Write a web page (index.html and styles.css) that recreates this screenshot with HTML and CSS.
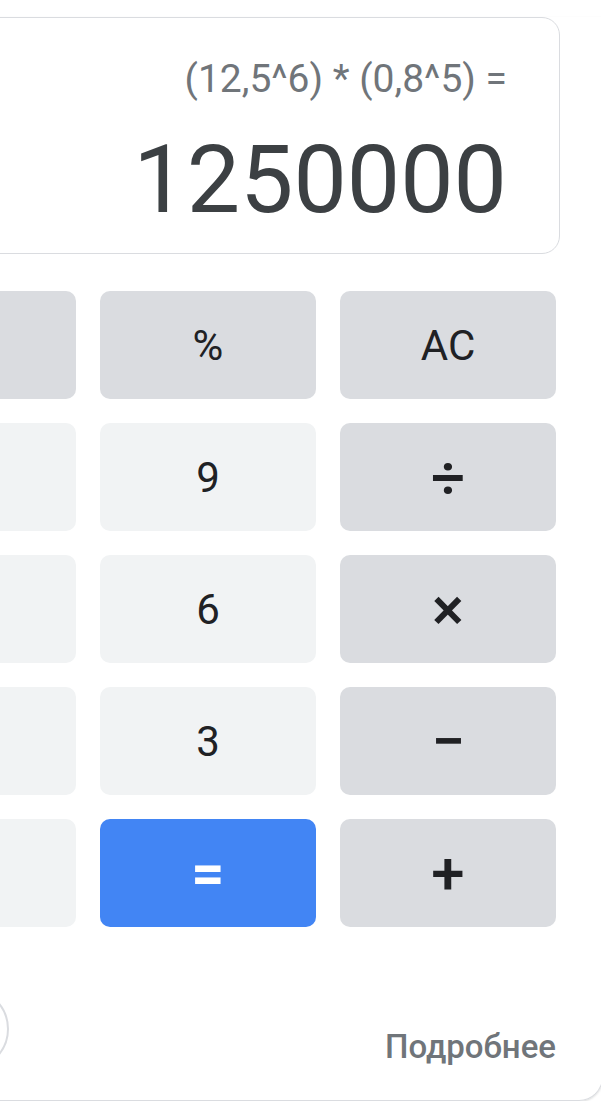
FILE: index.html
```html
<!DOCTYPE html>
<html>
  <head>
    <title>Калькулятор</title>
    <meta name="viewport" content="width=device-width, initial-scale=1.0">
    <link rel="stylesheet" href="styles.css">
  </head>
  <body>
    <div class="card">
      <div class="display">
        <div class="expression">(12,5^6) * (0,8^5) =</div>
        <div class="result">1250000</div>
      </div>

      <div class="keys">
        <button class="key op"></button>
        <button class="key op">%</button>
        <button class="key op">AC</button>

        <button class="key num"></button>
        <button class="key num">9</button>
        <button class="key op sign">÷</button>

        <button class="key num"></button>
        <button class="key num">6</button>
        <button class="key op sign">×</button>

        <button class="key num"></button>
        <button class="key num">3</button>
        <button class="key op sign">−</button>

        <button class="key num"></button>
        <button class="key equals">=</button>
        <button class="key op sign">+</button>
      </div>

      <div class="card-footer">
        <span class="history"></span>
        <a class="more" href="#">Подробнее</a>
      </div>
    </div>
  </body>
</html>
```

FILE: styles.css
```css
/* Calculator card */
html,
body {
  overflow: hidden;
}

body {
  margin: 0;
  background-color: #fff;
  font-family: Roboto, "Liberation Sans", Arial, sans-serif;
}

.card {
  box-sizing: border-box;
  width: 783px;
  margin-left: -180px;
  padding: 0 42px 30px 39px;
  border: 1px solid #dadce0;
  border-top: none;
  border-radius: 0 0 24px 24px;
  box-shadow: 0 1px 2px rgba(60, 64, 67, 0.18);
}

.display {
  margin-top: 17px;
  padding: 38px 52px 20px 20px;
  border: 1px solid #dadce0;
  border-radius: 18px;
  text-align: right;
}

.expression {
  font-size: 39px;
  line-height: 46px;
  color: #70757a;
}

.result {
  margin-top: 25px;
  font-size: 95px;
  line-height: 106px;
  color: #3c4043;
}

.keys {
  display: grid;
  grid-template-columns: repeat(3, 216px);
  grid-auto-rows: 108px;
  gap: 24px;
  margin: 37px 4px 0 0;
}

.key {
  border: none;
  border-radius: 10px;
  padding: 0;
  font-family: inherit;
  font-size: 42px;
  color: #202124;
  cursor: pointer;
}

.op {
  background-color: #dadce0;
}

.num {
  background-color: #f1f3f4;
}

.sign {
  font-weight: 500;
  font-size: 60px;
}

.equals {
  background-color: #4285f4;
  color: #fff;
  font-weight: 700;
  font-size: 58px;
}

.card-footer {
  display: flex;
  justify-content: space-between;
  align-items: flex-end;
  margin: 61px 4px 0 67px;
}

.history {
  box-sizing: border-box;
  width: 82px;
  height: 82px;
  border: 2px solid #dadce0;
  border-radius: 50%;
}

.more {
  margin-bottom: 5px;
  font-size: 33px;
  line-height: 36px;
  font-weight: 500;
  color: #70757a;
  text-decoration: none;
}
```
